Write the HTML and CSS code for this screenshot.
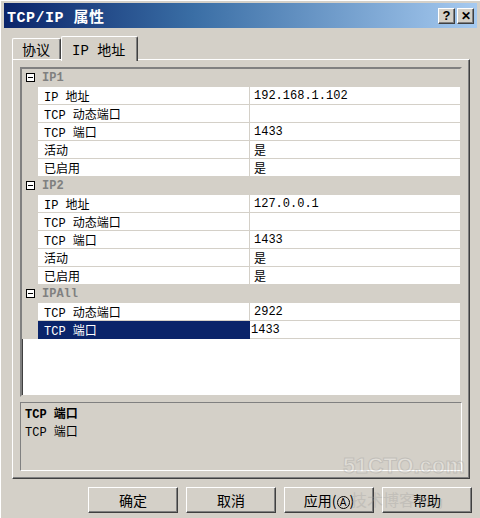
FILE: index.html
```html
<!DOCTYPE html>
<html lang="zh-CN">
<head>
  <meta charset="UTF-8">
  <title>TCP/IP 属性</title>
  <link rel="stylesheet" href="styles.css">
</head>
<body>
  <div class="window">
    <div class="titlebar">
      <span class="title">TCP/IP 属性</span>
      <div class="title-btns">
        <span class="tbtn">?</span>
        <span class="tbtn close">✕</span>
      </div>
    </div>

    <div class="tabs">
      <span class="tab">协议</span>
      <span class="tab active">IP 地址</span>
    </div>

    <div class="panel">
      <div class="grid">
        <div class="row cat"><span class="margin"><i class="toggle"></i></span><span class="cat-name">IP1</span></div>
        <div class="row"><span class="margin"></span><span class="name">IP 地址</span><span class="value">192.168.1.102</span></div>
        <div class="row"><span class="margin"></span><span class="name">TCP 动态端口</span><span class="value"></span></div>
        <div class="row"><span class="margin"></span><span class="name">TCP 端口</span><span class="value">1433</span></div>
        <div class="row"><span class="margin"></span><span class="name">活动</span><span class="value">是</span></div>
        <div class="row"><span class="margin"></span><span class="name">已启用</span><span class="value">是</span></div>

        <div class="row cat"><span class="margin"><i class="toggle"></i></span><span class="cat-name">IP2</span></div>
        <div class="row"><span class="margin"></span><span class="name">IP 地址</span><span class="value">127.0.0.1</span></div>
        <div class="row"><span class="margin"></span><span class="name">TCP 动态端口</span><span class="value"></span></div>
        <div class="row"><span class="margin"></span><span class="name">TCP 端口</span><span class="value">1433</span></div>
        <div class="row"><span class="margin"></span><span class="name">活动</span><span class="value">是</span></div>
        <div class="row"><span class="margin"></span><span class="name">已启用</span><span class="value">是</span></div>

        <div class="row cat"><span class="margin"><i class="toggle"></i></span><span class="cat-name">IPAll</span></div>
        <div class="row"><span class="margin"></span><span class="name">TCP 动态端口</span><span class="value">2922</span></div>
        <div class="row selected"><span class="margin"></span><span class="name">TCP 端口</span><span class="value editing">1433</span></div>
      </div>

      <div class="desc">
        <div class="desc-title">TCP 端口</div>
        <div class="desc-text">TCP 端口</div>
      </div>
    </div>

    <div class="buttons">
      <button>确定</button>
      <button>取消</button>
      <button>应用(<u>A</u>)</button>
      <button>帮助</button>
    </div>

    <div class="watermark">
      <span class="wm-big">51CTO.com</span>
      <span class="wm-small">技术博客 <em>Blog</em></span>
    </div>
  </div>
</body>
</html>
```

FILE: styles.css
```css
*{margin:0;padding:0;box-sizing:border-box;}
body{background:#d4d0c8;font-family:"Liberation Mono","Noto Sans CJK SC",monospace;font-size:12px;color:#000;}
.window{position:relative;width:480px;height:518px;padding:2px 3px;background:#d4d0c8;border-left:1px solid #fff;border-top:1px solid #fff;}

/* title bar */
.titlebar{display:flex;justify-content:space-between;align-items:center;height:25px;padding:0 3px 0 3px;background:linear-gradient(to right,#0a246a 0%,#3a6ea5 40%,#a6caf0 100%);}
.title{color:#fff;font-weight:bold;font-size:15px;letter-spacing:0.5px;}
.title-btns{display:flex;gap:2px;}
.tbtn{display:flex;justify-content:center;align-items:center;width:17px;height:16px;background:#d4d0c8;border:1px solid;border-color:#fff #404040 #404040 #fff;box-shadow:inset -1px -1px 0 #808080;font-family:"Liberation Sans",sans-serif;font-weight:bold;font-size:13px;line-height:1;}
.tbtn.close{font-size:12px;}

/* tabs */
.tabs{display:flex;align-items:flex-end;height:31px;padding-left:8px;}
.tab{display:flex;align-items:center;height:21px;padding:0 10px 0 9px;border:1px solid;border-bottom:0;border-color:#fff #404040 #fff #fff;border-radius:2px 2px 0 0;box-shadow:inset -1px 0 0 #808080;font-size:14px;font-family:"Noto Sans CJK SC",sans-serif;}
.tab.active{position:relative;height:25px;margin-bottom:-2px;padding:0 12px 0 10px;background:#d4d0c8;z-index:1;font-family:"Liberation Mono","Noto Sans CJK SC",monospace;}

/* panel */
.panel{display:flex;flex-direction:column;gap:5px;width:458px;height:420px;margin-left:8px;padding:7px;border:1px solid;border-color:#fff #404040 #404040 #fff;box-shadow:inset -1px -1px 0 #808080;}

/* property grid */
.grid{height:332px;background:#fff;border:2px solid;border-color:#808080 #d4d0c8 #d4d0c8 #808080;box-shadow:inset 1px 1px 0 #404040,inset -1px -1px 0 #fff;}
.row{display:grid;grid-template-columns:16px 212px 1fr;height:18px;border-bottom:1px solid #d4d0c8;}
.margin{display:flex;align-items:center;justify-content:center;background:#d4d0c8;}
.toggle{position:relative;display:block;width:9px;height:9px;border:1px solid #000;background:#fff;}
.toggle::after{content:"";position:absolute;left:1px;top:3px;width:5px;height:1px;background:#000;}
.name{display:flex;align-items:center;padding-left:6px;border-right:1px solid #d4d0c8;white-space:nowrap;}
.value{display:flex;align-items:center;padding-left:4px;white-space:nowrap;}
.cat{background:#d4d0c8;}
.cat-name{grid-column:2 / 4;display:flex;align-items:center;padding-left:4px;font-weight:bold;color:#808080;}
.selected .name{background:#0a246a;color:#fff;border-right-color:#0a246a;}
.value.editing{padding-left:1px;}

/* description */
.desc{height:69px;padding:3px 4px;border:1px solid;border-color:#808080 #fff #fff #808080;box-shadow:inset 1px 1px 0 #d4d0c8;line-height:18px;}
.desc-title{font-weight:bold;}

/* buttons */
.buttons{display:flex;justify-content:flex-end;gap:8px;margin-top:8px;padding-right:5px;}
button{width:90px;height:26px;background:#d4d0c8;border:1px solid;border-color:#fff #404040 #404040 #fff;box-shadow:inset -1px -1px 0 #808080;font-family:"Noto Sans CJK SC",sans-serif;font-size:14px;color:#000;}
button u{text-decoration:none;display:inline-block;width:13px;height:13px;line-height:12px;border:1px solid #000;border-radius:50%;font-size:10px;font-family:"Liberation Sans",sans-serif;}

/* watermark */
.watermark{position:absolute;left:342px;top:452px;display:flex;flex-direction:column;align-items:flex-start;opacity:0.3;pointer-events:none;}
.wm-big{font-family:"Liberation Sans",sans-serif;font-weight:bold;font-size:22px;color:#fff;-webkit-text-stroke:1px #999;}
.wm-small{margin-top:8px;padding-left:8px;font-family:"Noto Sans CJK SC",sans-serif;font-size:16px;color:#999;}
.wm-small em{font-style:normal;font-family:"Liberation Sans",sans-serif;font-size:12px;}
```
